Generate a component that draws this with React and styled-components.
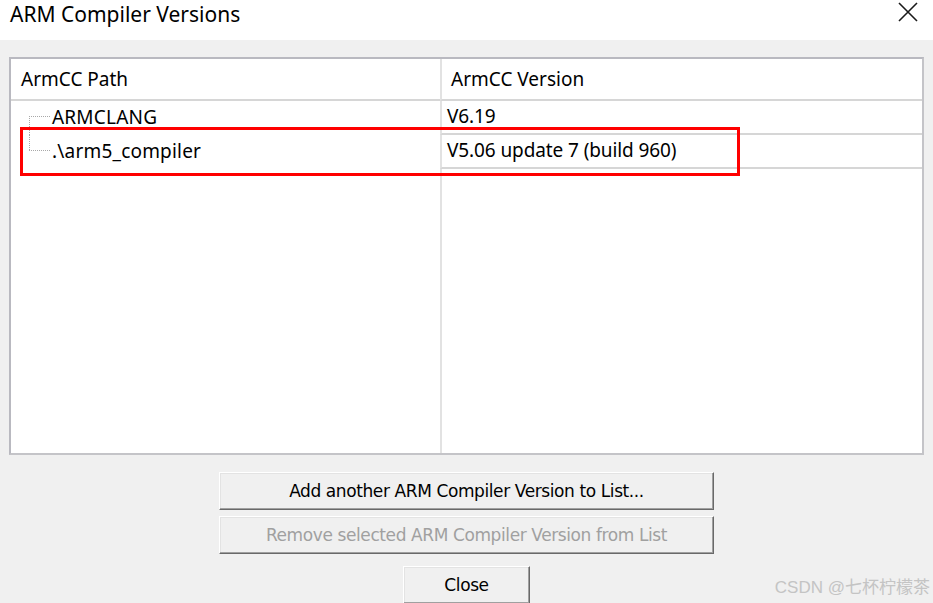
import React from 'react';
import styled, { createGlobalStyle } from 'styled-components';

const GlobalStyle = createGlobalStyle`
  *, *::before, *::after {
    box-sizing: border-box;
  }
  html, body {
    margin: 0;
    padding: 0;
    background: #f0f0f0;
  }
  body {
    width: 933px;
    height: 603px;
    overflow: hidden;
  }
`;

const rows = [
  { id: 1, path: 'ARMCLANG', version: 'V6.19', branch: 'first' },
  { id: 2, path: '.\\arm5_compiler', version: 'V5.06 update 7 (build 960)', branch: 'last' }
];

const Window = styled.div`
  position: relative;
  width: 933px;
  height: 603px;
  display: flex;
  flex-direction: column;
  background: #f0f0f0;
  font-family: 'Noto Sans', 'Open Sans', sans-serif;
  color: #000;
`;

const TitleBar = styled.div`
  height: 40px;
  flex: none;
  display: flex;
  align-items: flex-start;
  justify-content: space-between;
  padding: 0 15px 0 10px;
  background: #fff;
`;

const Title = styled.div`
  margin-top: 1px;
  font-size: 21px;
  line-height: 26px;
  letter-spacing: 0;
  color: #000;
`;

const CloseIcon = styled.svg`
  width: 20px;
  height: 20px;
  margin-top: 2px;
`;

const Body = styled.div`
  flex: 1;
  display: flex;
  flex-direction: column;
  align-items: center;
  padding: 17px 9px 0 9px;
`;

const List = styled.div`
  align-self: stretch;
  height: 398px;
  display: grid;
  grid-template-columns: 429px 1fr;
  grid-template-rows: 42px 34px 34px 1fr;
  background: #fff;
  border: 2px solid #b9b9c0;
  border-right-color: #c4c4c8;
  border-bottom-color: #c4c4c8;
`;

const HeadCell = styled.div`
  display: flex;
  align-items: center;
  padding: 0 0 0 ${(p) => (p.$second ? '9px' : '10px')};
  font-size: 19px;
  letter-spacing: 0;
  border-bottom: 2px solid #d6d6d6;
  border-left: ${(p) => (p.$second ? '2px solid #e2e2e2' : 'none')};
`;

const PathCell = styled.div`
  display: flex;
  align-items: center;
  padding-bottom: 3px;
  font-size: 19px;
  letter-spacing: 0.2px;
`;

const VersionCell = styled.div`
  display: flex;
  align-items: center;
  padding: 0 0 3px 5px;
  font-size: 19px;
  letter-spacing: -0.1px;
  border-left: 2px solid #e2e2e2;
  border-bottom: ${(p) => (p.$filler ? 'none' : '2px solid #d6d6d6')};
`;

const Branch = styled.svg`
  width: 41px;
  height: 34px;
  flex: none;
  margin-bottom: -3px;
`;

const Buttons = styled.div`
  margin-top: 17px;
  display: flex;
  flex-direction: column;
  align-items: center;
  gap: 6px;
`;

const Button = styled.button`
  width: ${(p) => p.$width}px;
  height: 38px;
  margin-top: ${(p) => p.$gap || 0}px;
  padding: 0;
  background: #f0f0f0;
  border: 1px solid;
  border-color: #fff #696969 #696969 #fff;
  box-shadow: inset -1px -1px 0 #a0a0a0, inset 1px 1px 0 #e3e3e3;
  font-family: 'DejaVu Sans', sans-serif;
  font-size: 17px;
  letter-spacing: -0.4px;
  color: ${(p) => (p.disabled ? '#a0a0a0' : '#000')};
`;

const Highlight = styled.div`
  position: absolute;
  left: 20px;
  top: 127px;
  width: 720px;
  height: 49px;
  border: 3px solid #ff0000;
  pointer-events: none;
`;

const Watermark = styled.div`
  position: absolute;
  right: 3px;
  bottom: 5px;
  font-family: 'Liberation Sans', 'Noto Sans CJK SC', sans-serif;
  font-size: 17px;
  color: #c4c4c4;
`;

const TreeBranch = ({ kind }) => (
  <Branch viewBox="0 0 41 34">
    <line
      x1="18.5"
      x2="18.5"
      y1={kind === 'first' ? 15 : 0}
      y2={kind === 'first' ? 34 : 16}
      stroke="#a8a8a8"
      strokeDasharray="1 1"
    />
    <line x1="18" x2="40" y1="15.5" y2="15.5" stroke="#a8a8a8" strokeDasharray="1 1" />
  </Branch>
);

const App = () => (
  <Window>
    <GlobalStyle />
    <TitleBar>
      <Title>ARM Compiler Versions</Title>
      <CloseIcon viewBox="0 0 20 20">
        <path d="M1 1L19 19M19 1L1 19" stroke="#1a1a1a" strokeWidth="1.6" fill="none" />
      </CloseIcon>
    </TitleBar>
    <Body>
      <List>
        <HeadCell>ArmCC Path</HeadCell>
        <HeadCell $second>ArmCC Version</HeadCell>
        {rows.map((row) => (
          <React.Fragment key={row.id}>
            <PathCell>
              <TreeBranch kind={row.branch} />
              {row.path}
            </PathCell>
            <VersionCell>{row.version}</VersionCell>
          </React.Fragment>
        ))}
        <div />
        <VersionCell $filler />
      </List>
      <Buttons>
        <Button $width={495}>Add another ARM Compiler Version to List...</Button>
        <Button $width={495} disabled>
          Remove selected ARM Compiler Version from List
        </Button>
        <Button $width={127} $gap={6}>
          Close
        </Button>
      </Buttons>
    </Body>
    <Highlight />
    <Watermark>CSDN @七杯柠檬茶</Watermark>
  </Window>
);

export default App;
